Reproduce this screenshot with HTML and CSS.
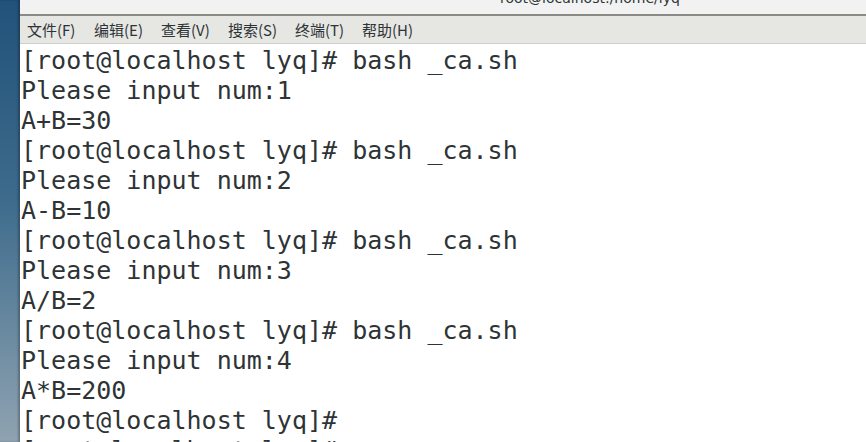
FILE: index.html
```html
<!DOCTYPE html>
<html lang="zh">
<head>
  <meta charset="UTF-8" />
  <title>root@localhost:/home/lyq</title>
  <link rel="stylesheet" href="styles.css">
</head>
<body>
  <div class="desktop"></div>
  <div class="window">
    <div class="titlebar"><span class="title">root@localhost:/home/lyq</span></div>
    <div class="menubar">
      <span class="menu">文件(F)</span>
      <span class="menu">编辑(E)</span>
      <span class="menu">查看(V)</span>
      <span class="menu">搜索(S)</span>
      <span class="menu">终端(T)</span>
      <span class="menu">帮助(H)</span>
    </div>
    <pre class="terminal">[root@localhost lyq]# bash _ca.sh
Please input num:1
A+B=30
[root@localhost lyq]# bash _ca.sh
Please input num:2
A-B=10
[root@localhost lyq]# bash _ca.sh
Please input num:3
A/B=2
[root@localhost lyq]# bash _ca.sh
Please input num:4
A*B=200
[root@localhost lyq]#
[root@localhost lyq]#</pre>
  </div>
</body>
</html>
```

FILE: styles.css
```css
html, body {
  margin: 0;
  height: 100%;
}

body {
  display: flex;
  overflow: hidden;
  background: #fff;
}

.desktop {
  width: 20px;
  flex-shrink: 0;
  background: linear-gradient(#22527a, #3d6b8c 45%, #8fa3b1);
  box-shadow: inset -2px 0 2px rgba(0,0,0,0.25);
}

.window {
  flex: 1;
  display: flex;
  flex-direction: column;
  min-width: 0;
}

.titlebar {
  height: 14px;
  background: #f2f2f2;
  border-bottom: 2px solid #8b8b86;
  overflow: hidden;
  padding-left: 480px;
}

.title {
  display: block;
  margin-top: -11px;
  font-family: "DejaVu Sans", sans-serif;
  font-size: 14px;
  line-height: 18px;
  color: #2e3436;
}

.menubar {
  height: 27px;
  background: #e6e6e3;
  border-bottom: 1px solid #cfcfcc;
  display: flex;
  align-items: center;
  padding-left: 7px;
}

.menu {
  width: 67px;
  font-family: "Noto Sans CJK SC", sans-serif;
  font-size: 15px;
  color: #2e3436;
}

.terminal {
  flex: 1;
  margin: 0;
  padding: 2px 0 0 1px;
  background: #fff;
  color: #2e3436;
  font-family: "DejaVu Sans Mono", monospace;
  font-size: 25px;
  line-height: 30px;
  overflow: hidden;
}
```
